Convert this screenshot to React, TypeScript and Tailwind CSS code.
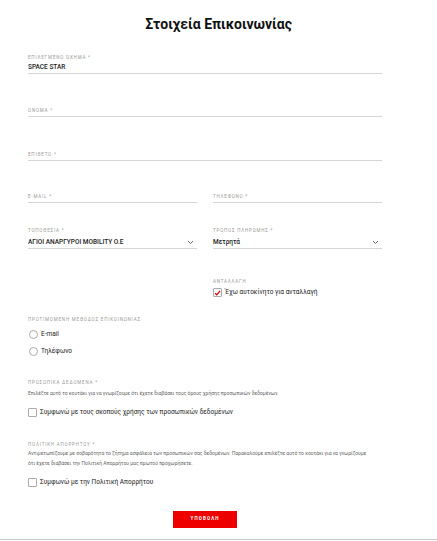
import React from "react";

const Label = ({ children }: { children: React.ReactNode }) => (
  <div className="h-[8px] text-[4.5px] leading-[8px] tracking-[0.18em] text-[#999] uppercase">{children}</div>
);

const TextField = ({ label, value, placeholder }: { label?: string; value?: string; placeholder?: string }) => (
  <div className="flex flex-col">
    <Label>{label ?? ""}</Label>
    <div className="h-[12px] border-b border-[#d6d6d6] flex items-start">
      {value ? (
        <span className="text-[6.5px] leading-[10px] text-[#222] font-medium">{value}</span>
      ) : (
        <span className="text-[4.5px] leading-[7px] pt-[2px] tracking-[0.18em] text-[#999]">{placeholder}</span>
      )}
    </div>
  </div>
);

const Chevron = () => (
  <svg width="7" height="5" viewBox="0 0 7 5" className="mt-[1px]">
    <path d="M1 1 L3.5 3.5 L6 1" stroke="#555" strokeWidth="0.9" fill="none" />
  </svg>
);

const SelectField = ({ label, value }: { label: string; value: string }) => (
  <div className="flex flex-col">
    <Label>{label}</Label>
    <div className="h-[14px] border-b border-[#d6d6d6] flex items-center justify-between pr-[3px]">
      <span className="text-[6.5px] leading-[10px] text-[#222] font-medium">{value}</span>
      <Chevron />
    </div>
  </div>
);

const Box = ({ checked }: { checked?: boolean }) => (
  <div className="w-[9px] h-[9px] border border-[#aaa] rounded-[1px] bg-white flex items-center justify-center shrink-0">
    {checked && (
      <svg width="8" height="8" viewBox="0 0 8 8">
        <path d="M1.2 4.2 L3.1 6 L7 1.5" stroke="#d40000" strokeWidth="1.4" fill="none" />
      </svg>
    )}
  </div>
);

const Radio = ({ label }: { label: string }) => (
  <div className="flex items-center gap-[3px] h-[10px]">
    <div className="w-[9px] h-[9px] rounded-full border border-[#aaa] bg-white" />
    <span className="text-[6.5px] text-[#222]">{label}</span>
  </div>
);

export default function App() {
  return (
    <div className="w-[437px] h-[541px] bg-white font-[Roboto,sans-serif] flex flex-col">
      <div className="pt-[15px] text-center text-[14px] leading-[18px] font-bold text-[#111]">Στοιχεία Επικοινωνίας</div>
      <div className="ml-[28px] w-[354px] flex flex-col">
        <div className="mt-[21px]">
          <TextField label="Επιλεγμένο όχημα *" value="SPACE STAR" />
        </div>
        <div className="mt-[23px]">
          <TextField placeholder="ΟΝΟΜΑ *" />
        </div>
        <div className="mt-[24px]">
          <TextField placeholder="ΕΠΙΘΕΤΟ *" />
        </div>
        <div className="mt-[22px] grid grid-cols-2 gap-x-[16px]">
          <TextField placeholder="E-MAIL *" />
          <TextField placeholder="ΤΗΛΕΦΩΝΟ *" />
        </div>
        <div className="mt-[24px] grid grid-cols-2 gap-x-[16px]">
          <SelectField label="ΤΟΠΟΘΕΣΙΑ *" value="ΑΓΙΟΙ ΑΝΑΡΓΥΡΟΙ MOBILITY O.E" />
          <SelectField label="ΤΡΟΠΟΣ ΠΛΗΡΩΜΗΣ *" value="Μετρητά" />
        </div>
        <div className="mt-[29px] grid grid-cols-2 gap-x-[16px]">
          <div />
          <div className="flex flex-col">
            <Label>ΑΝΤΑΛΛΑΓΗ</Label>
            <div className="mt-[2px] flex items-center gap-[3px]">
              <Box checked />
              <span className="text-[6.5px] text-[#222]">Έχω αυτοκίνητο για ανταλλαγή</span>
            </div>
          </div>
        </div>
        <div className="mt-[18px] flex flex-col">
          <Label>ΠΡΟΤΙΜΟΜΕΝΗ ΜΕΘΟΔΟΣ ΕΠΙΚΟΙΝΩΝΙΑΣ</Label>
          <div className="mt-[6px] flex flex-col gap-[7px] pl-[1px]">
            <Radio label="E-mail" />
            <Radio label="Τηλέφωνο" />
          </div>
        </div>
        <div className="mt-[22px] flex flex-col">
          <Label>ΠΡΟΣΩΠΙΚΑ ΔΕΔΟΜΕΝΑ *</Label>
          <p className="mt-[1px] text-[5px] leading-[10px] text-[#666]">
            Επιλέξτε αυτό το κουτάκι για να γνωρίζουμε ότι έχετε διαβάσει τους όρους χρήσης προσωπικών δεδομένων.
          </p>
          <div className="mt-[10px] flex items-center gap-[3px]">
            <Box />
            <span className="text-[6.5px] text-[#222]">Συμφωνώ με τους σκοπούς χρήσης των προσωπικών δεδομένων</span>
          </div>
        </div>
        <div className="mt-[23px] flex flex-col">
          <Label>ΠΟΛΙΤΙΚΗ ΑΠΟΡΡΗΤΟΥ *</Label>
          <p className="-mt-[1px] text-[5px] leading-[10px] text-[#666] pr-[8px]">
            Αντιμετωπίζουμε με σοβαρότητα το ζήτημα ασφάλεια των προσωπικών σας δεδομένων. Παρακαλούμε επιλέξτε αυτό το κουτάκι για να γνωρίζουμε ότι έχετε διαβάσει την Πολιτική Απορρήτου μας πρωτού προχωρήσετε.
          </p>
          <div className="mt-[10px] flex items-center gap-[3px]">
            <Box />
            <span className="text-[6.5px] text-[#222]">Συμφωνώ με την Πολιτική Απορρήτου</span>
          </div>
        </div>
        <div className="mt-[24px] flex justify-center">
          <button className="w-[64px] h-[17px] bg-[#ee0000] text-white text-[4.5px] font-bold tracking-[0.25em]">ΥΠΟΒΟΛΗ</button>
        </div>
      </div>
      <div className="mt-auto mb-[1px] h-[1px] bg-[#c8c8c8]" />
    </div>
  );
}
